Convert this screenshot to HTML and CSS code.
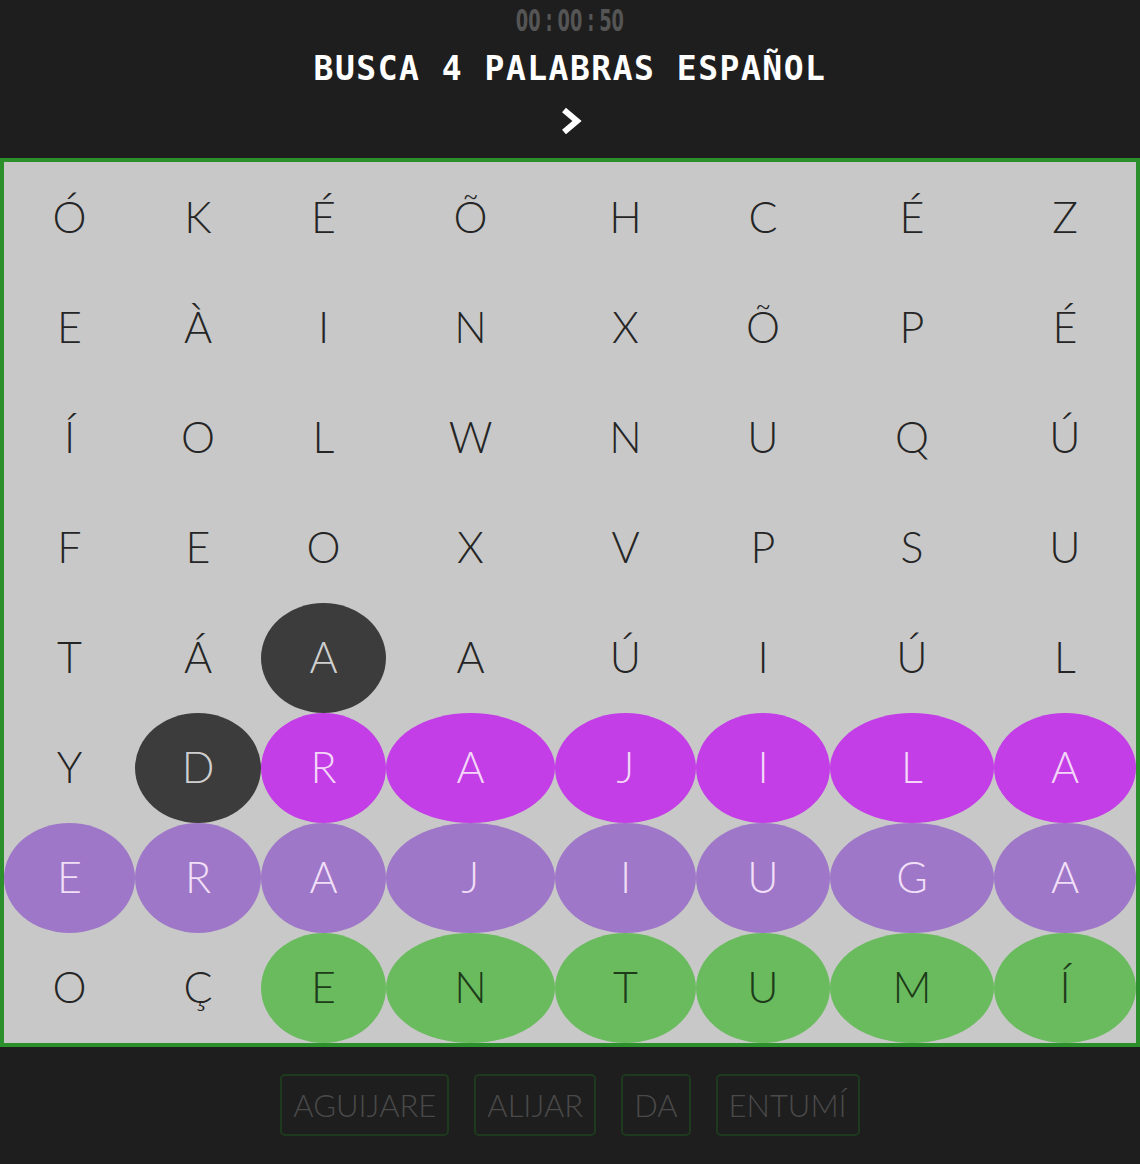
FILE: index.html
```html
<!DOCTYPE html>
<html lang="es">
<head>
<meta charset="utf-8">
<title>Busca 4 palabras español</title>
<link rel="stylesheet" href="styles.css">
</head>
<body>
<header class="top">
  <div class="timer">00 : 00 : 50</div>
  <h1 class="title">BUSCA 4 PALABRAS ESPAÑOL</h1>
  <div class="next">
    <svg width="24" height="28" viewBox="0 0 24 28"><polyline points="5,3 18,14 5,25" fill="none" stroke="#fff" stroke-width="6" stroke-linejoin="miter"/></svg>
  </div>
</header>
<main class="board">
  <div class="c">Ó</div><div class="c">K</div><div class="c">É</div><div class="c">Õ</div><div class="c">H</div><div class="c">C</div><div class="c">É</div><div class="c">Z</div>
  <div class="c">E</div><div class="c">À</div><div class="c">I</div><div class="c">N</div><div class="c">X</div><div class="c">Õ</div><div class="c">P</div><div class="c">É</div>
  <div class="c">Í</div><div class="c">O</div><div class="c">L</div><div class="c">W</div><div class="c">N</div><div class="c">U</div><div class="c">Q</div><div class="c">Ú</div>
  <div class="c">F</div><div class="c">E</div><div class="c">O</div><div class="c">X</div><div class="c">V</div><div class="c">P</div><div class="c">S</div><div class="c">U</div>
  <div class="c">T</div><div class="c">Á</div><div class="c dark">A</div><div class="c">A</div><div class="c">Ú</div><div class="c">I</div><div class="c">Ú</div><div class="c">L</div>
  <div class="c">Y</div><div class="c dark">D</div><div class="c mag">R</div><div class="c mag">A</div><div class="c mag">J</div><div class="c mag">I</div><div class="c mag">L</div><div class="c mag">A</div>
  <div class="c pur">E</div><div class="c pur">R</div><div class="c pur">A</div><div class="c pur">J</div><div class="c pur">I</div><div class="c pur">U</div><div class="c pur">G</div><div class="c pur">A</div>
  <div class="c">O</div><div class="c">Ç</div><div class="c grn">E</div><div class="c grn">N</div><div class="c grn">T</div><div class="c grn">U</div><div class="c grn">M</div><div class="c grn">Í</div>
</main>
<footer class="words">
  <span class="word">AGUIJARE</span>
  <span class="word">ALIJAR</span>
  <span class="word">DA</span>
  <span class="word">ENTUMÍ</span>
</footer>
</body>
</html>
```

FILE: styles.css
```css
* { box-sizing: border-box; }
html, body { margin: 0; padding: 0; }
body {
  background: #1e1e1e;
  width: 1140px;
  height: 1164px;
  overflow: hidden;
  font-family: "Lato", "DejaVu Sans", sans-serif;
}
.top {
  height: 158px;
  display: flex;
  flex-direction: column;
  align-items: center;
}
.timer {
  margin-top: 4px;
  height: 34px;
  font-family: "DejaVu Sans Condensed", "DejaVu Sans", sans-serif;
  font-weight: bold;
  font-size: 30px;
  line-height: 34px;
  color: #555;
  transform: scaleX(0.66);
  word-spacing: -2px;
  white-space: nowrap;
}
.title {
  margin: 11px 0 0;
  font-family: "DejaVu Sans Mono", monospace;
  font-weight: bold;
  font-size: 33px;
  line-height: 40px;
  letter-spacing: 1.5px;
  color: #fff;
}
.next {
  margin-top: 18px;
  height: 28px;
  display: flex;
  padding-left: 2px;
}
.board {
  border: 4px solid #2b8f2b;
  background: #c8c8c8;
  display: grid;
  grid-template-columns: 131px 126px 125px 169px 141px 134px 164px 142px;
  grid-auto-rows: 110px;
  height: 889px;
  padding: 1px 0 0;
}
.c {
  display: flex;
  align-items: center;
  justify-content: center;
  padding-bottom: 3px;
  font-size: 43px;
  font-weight: 300;
  color: #252525;
  border-radius: 50%;
}
.dark { background: #3c3c3c; color: #cfcfcf; }
.mag { background: #c33ee6; color: #f3d6f8; }
.pur { background: #9e77c8; color: #f1def7; }
.grn { background: #69bb5e; color: #1d3a19; }
.words {
  display: flex;
  justify-content: center;
  gap: 25px;
  padding-top: 27px;
}
.word {
  height: 62px;
  border: 2px solid #1e3a1e;
  border-radius: 5px;
  padding: 0 11px;
  display: flex;
  align-items: center;
  font-size: 31px;
  font-weight: 300;
  color: #4a4a4a;
}
```
